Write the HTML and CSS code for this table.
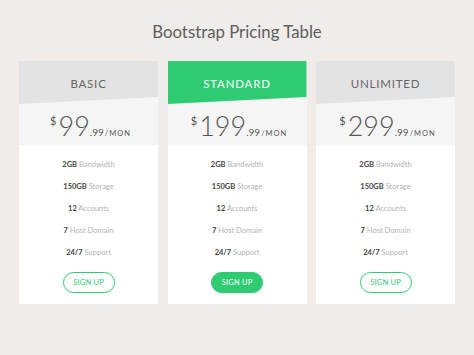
FILE: index.html
```html
<!DOCTYPE html>
<html>
<head>
<meta charset="utf-8">
<link rel="stylesheet" href="styles.css">
</head>
<body>
<div class="page">
  <h1 class="title">Bootstrap Pricing Table</h1>
  <div class="plans">
    <div class="card">
      <div class="top">
        <div class="head">BASIC</div>
        <div class="price"><span class="cur">$</span><span class="amt">99</span><span class="cents">.99</span><span class="per">/MON</span></div>
      </div>
      <ul class="feats">
        <li><b>2GB</b> Bandwidth</li>
        <li><b>150GB</b> Storage</li>
        <li><b>12</b> Accounts</li>
        <li><b>7</b> Host Domain</li>
        <li><b>24/7</b> Support</li>
      </ul>
      <div class="btn-row"><span class="btn">SIGN UP</span></div>
    </div>
    <div class="card featured">
      <div class="top">
        <div class="head">STANDARD</div>
        <div class="price"><span class="cur">$</span><span class="amt">199</span><span class="cents">.99</span><span class="per">/MON</span></div>
      </div>
      <ul class="feats">
        <li><b>2GB</b> Bandwidth</li>
        <li><b>150GB</b> Storage</li>
        <li><b>12</b> Accounts</li>
        <li><b>7</b> Host Domain</li>
        <li><b>24/7</b> Support</li>
      </ul>
      <div class="btn-row"><span class="btn">SIGN UP</span></div>
    </div>
    <div class="card">
      <div class="top">
        <div class="head">UNLIMITED</div>
        <div class="price"><span class="cur">$</span><span class="amt">299</span><span class="cents">.99</span><span class="per">/MON</span></div>
      </div>
      <ul class="feats">
        <li><b>2GB</b> Bandwidth</li>
        <li><b>150GB</b> Storage</li>
        <li><b>12</b> Accounts</li>
        <li><b>7</b> Host Domain</li>
        <li><b>24/7</b> Support</li>
      </ul>
      <div class="btn-row"><span class="btn">SIGN UP</span></div>
    </div>
  </div>
</div>
</body>
</html>
```
FILE: styles.css
```css
html, body {
  margin: 0;
  padding: 0;
}
body {
  background: #efecea;
  font-family: Lato, "Open Sans", sans-serif;
  width: 474px;
  height: 355px;
  overflow: hidden;
}
.page {
  padding-top: 20px;
}
.title {
  margin: 0;
  text-align: center;
  font-weight: 400;
  font-size: 16.8px;
  line-height: 24px;
  color: #5e5e5e;
  letter-spacing: 0;
}
.plans {
  display: flex;
  justify-content: center;
  gap: 9.5px;
  margin-top: 17px;
}
.card {
  width: 139px;
  background: #fff;
  padding-bottom: 11px;
}
.top {
  background: #f6f5f5;
  height: 84px;
}
.head {
  height: 43px;
  background: #e3e3e3;
  clip-path: polygon(0 0, 100% 0, 100% 84%, 0 100%);
  text-align: center;
  font-size: 11.5px;
  line-height: 12px;
  padding-top: 17px;
  box-sizing: border-box;
  letter-spacing: 0.8px;
  color: #666;
}
.featured .head {
  background: #2ecb72;
  color: #fff;
}
.price {
  text-align: center;
  color: #555;
  line-height: 1;
  padding-top: 8px;
  padding-left: 4px;
  white-space: nowrap;
}
.cur {
  font-size: 11px;
  vertical-align: 11px;
  margin-right: 2px;
}
.amt {
  font-size: 27px;
  font-weight: 300;
}
.cents {
  font-size: 10px;
  font-weight: 400;
}
.per {
  font-size: 7.5px;
  letter-spacing: 1px;
  margin-left: 1px;
}
.feats {
  list-style: none;
  margin: 0;
  padding: 9px 0 0;
  text-align: center;
}
.feats li {
  height: 22px;
  line-height: 22px;
  font-size: 7.5px;
  color: #b3b3b3;
}
.feats b {
  color: #444;
  font-weight: 700;
}
.btn-row {
  display: flex;
  justify-content: center;
  margin-top: 8px;
}
.btn {
  width: 52px;
  height: 21px;
  box-sizing: border-box;
  border: 1px solid #2ecb72;
  border-radius: 11px;
  color: #2ecb72;
  font-size: 7.5px;
  display: flex;
  align-items: center;
  justify-content: center;
  letter-spacing: 0.2px;
}
.featured .btn {
  background: #2ecb72;
  color: #fff;
}
```
